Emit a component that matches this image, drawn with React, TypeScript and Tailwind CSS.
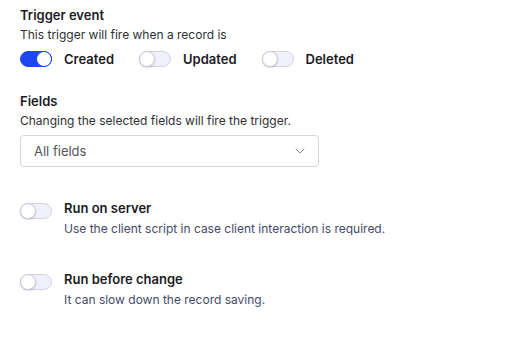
import { ChevronDown } from 'lucide-react'

const Toggle = ({ on = false }: { on?: boolean }) => (
   <span
      className={`relative inline-flex h-[16px] w-[32px] shrink-0 items-center rounded-full border ${
         on ? 'border-[#1d46f0] bg-[#1d46f0]' : 'border-[#d3d4e2] bg-[#eff0fa]'
      }`}
   >
      <span
         className={`absolute top-[-1px] h-[16px] w-[16px] rounded-full bg-white ${
            on ? 'right-[-1px] border border-[#1d46f0]' : 'left-[-1px] border border-[#c9cad6] shadow-[0_1px_2px_rgba(0,0,0,0.15)]'
         }`}
      />
   </span>
)

const events = [
   { label: 'Created', on: true },
   { label: 'Updated', on: false },
   { label: 'Deleted', on: false },
]

const options = [
   { title: 'Run on server', hint: 'Use the client script in case client interaction is required.' },
   { title: 'Run before change', hint: 'It can slow down the record saving.' },
]

export default function App() {
   return (
      <div className="min-h-[338px] w-[516px] bg-white px-5 pt-[6px] font-['Inter',sans-serif] text-[#1b1b1f]">
         <h3 className="text-[13px] font-semibold leading-[18px]">Trigger event</h3>
         <p className="mt-[3px] text-[12px] leading-[16px] text-[#2e2e33]">
            This trigger will fire when a record is
         </p>
         <div className="mt-[7px] flex items-center gap-[25px]">
            {events.map((e) => (
               <label key={e.label} className="flex items-center gap-[12px]">
                  <Toggle on={e.on} />
                  <span className="text-[13px] font-semibold leading-[18px]">{e.label}</span>
               </label>
            ))}
         </div>

         <h3 className="mt-[24px] text-[13px] font-semibold leading-[18px]">Fields</h3>
         <p className="mt-[3px] text-[12px] leading-[16px] text-[#2e2e33]">
            Changing the selected fields will fire the trigger.
         </p>
         <div className="mt-[6px] flex h-[32px] w-[299px] items-center justify-between rounded-[4px] border border-[#d6d6de] pl-[13px] pr-[10px]">
            <span className="pt-[1px] text-[13px] text-[#55555d]">All fields</span>
            <ChevronDown className="h-4 w-4 text-[#8a8a94]" strokeWidth={1.5} />
         </div>

         <div className="mt-[32px] flex flex-col gap-[33px]">
            {options.map((o) => (
               <div key={o.title} className="flex items-start gap-[12px]">
                  <div className="pt-[2px]">
                     <Toggle />
                  </div>
                  <div>
                     <div className="text-[13px] font-semibold leading-[18px]">{o.title}</div>
                     <div className="mt-[4px] text-[12px] leading-[16px] text-[#454a68]">{o.hint}</div>
                  </div>
               </div>
            ))}
         </div>
      </div>
   )
}
